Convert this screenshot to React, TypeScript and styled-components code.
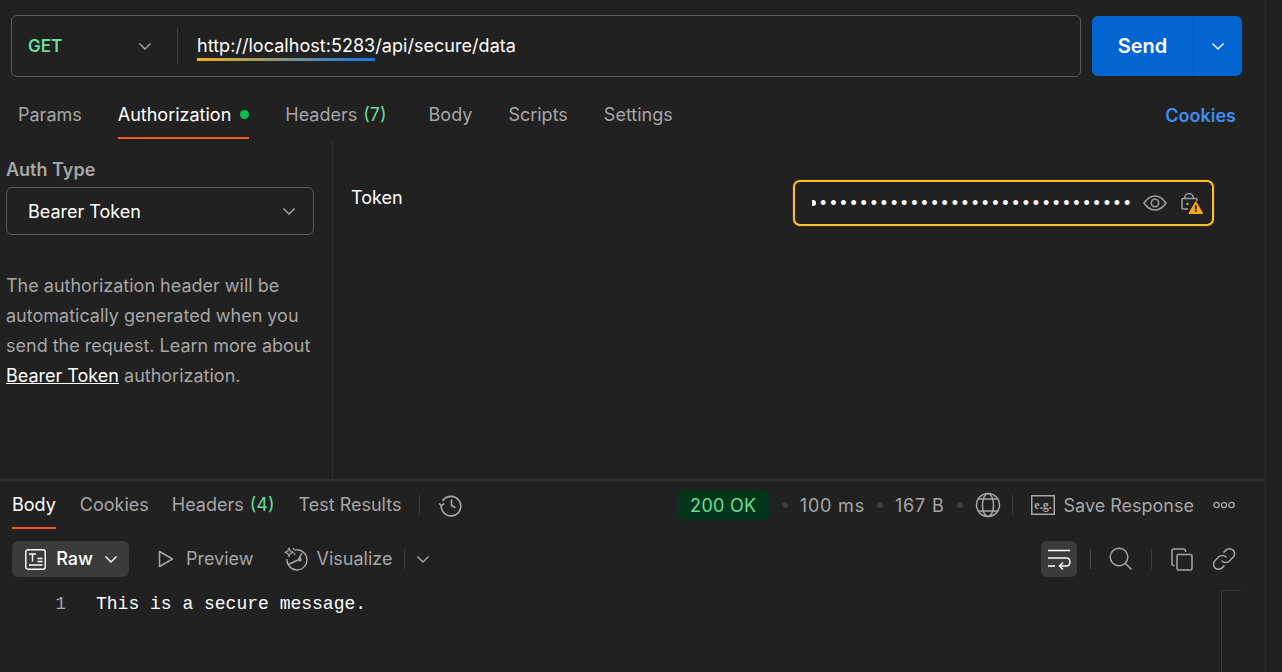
import React from "react";
import styled, { createGlobalStyle } from "styled-components";

const Global = createGlobalStyle`
  html, body { margin: 0; padding: 0; background: #212121; }
  * { box-sizing: border-box; }
`;

const Page = styled.div`
  width: 1282px; height: 672px; background: #212121; overflow: hidden;
  font-family: Inter, "Noto Sans", sans-serif; font-size: 18px; color: #fff;
`;
const Main = styled.main`
  width: 1266px; height: 672px; border-right: 1px solid #2c2c2c;
  display: flex; flex-direction: column;
`;
const RequestPane = styled.section`
  height: 481px; border-bottom: 2px solid #2e2e2e; display: flex; flex-direction: column; flex: none;
`;
const UrlRow = styled.div`
  display: flex; gap: 11px; padding: 15px 23px 0 11px; align-items: center; flex: none;
`;
const UrlBox = styled.div`
  flex: 1; height: 62px; border: 1px solid #5c5c5c; border-radius: 6px;
  display: flex; align-items: center;
`;
const Method = styled.div`
  width: 166px; height: 36px; padding: 0 24px 0 16px; display: flex; align-items: center; justify-content: space-between;
  border-right: 1px solid #3c3c3c; color: #6bdd9a; font-weight: 600; font-size: 17px;
`;
const UrlText = styled.div`
  margin-left: 19px; color: #fff; line-height: 24px; letter-spacing: 0.04px;
`;
const Variable = styled.span`
  display: inline-block; border-bottom: 3px solid; line-height: 24px; margin-bottom: -5px;
  border-image: linear-gradient(90deg, #f0b416, #0a74f0) 1;
`;
const SendGroup = styled.div`
  width: 150px; height: 60px; border-radius: 6px; background: #0265d2; display: flex; flex: none;
`;
const SendLabel = styled.div`
  width: 102px; border-right: 1px solid #0353ab; display: flex; align-items: center; justify-content: center;
  font-weight: 600; font-size: 20px;
`;
const SendArrow = styled.div`
  flex: 1; display: flex; align-items: center; justify-content: center; color: #fff;
`;
const TabRow = styled.div`
  display: flex; align-items: stretch; height: 48px; margin-top: 14px; padding: 0 29px 0 18px; flex: none;
`;
const Tab = styled.div<{ $active?: boolean; $pad?: number }>`
  margin-right: ${p => p.$pad ?? 36}px; height: 48px; display: flex; align-items: center;
  color: ${p => (p.$active ? "#fff" : "#a6a6a6")};
  border-bottom: 2px solid ${p => (p.$active ? "#f05a28" : "transparent")};
  white-space: nowrap;
`;
const Count = styled.span`
  color: #6bdd9a; margin-left: 6px;
`;
const GreenDot = styled.span`
  width: 9px; height: 9px; border-radius: 50%; background: #0cbb52; margin-left: 9px;
`;
const CookiesLink = styled.div`
  margin-left: auto; color: #3d8ef0; font-weight: 600; display: flex; align-items: center;
`;
const AuthBody = styled.div`
  flex: 1; display: flex; min-height: 0;
`;
const AuthSide = styled.div`
  width: 333px; flex: none; border-right: 1px solid #303030; padding: 19px 18px 0 6px;
`;
const AuthLabel = styled.div`
  font-weight: 600; color: #a6a6a6; font-size: 18px; line-height: 24px;
`;
const AuthSelect = styled.div`
  margin-top: 5px; height: 48px; border: 1px solid #5c5c5c; border-radius: 6px;
  display: flex; align-items: center; justify-content: space-between; padding: 0 16px 0 21px;
`;
const AuthNote = styled.p`
  margin: 36px 0 0; color: #a6a6a6; line-height: 30px; font-size: 18px; white-space: nowrap;
`;
const NoteLink = styled.span`
  color: #fff; text-decoration: underline;
`;
const TokenArea = styled.div`
  flex: 1; display: flex; align-items: flex-start; justify-content: space-between; padding: 41px 51px 0 18px;
`;
const TokenLabel = styled.div`
  line-height: 36px;
`;
const TokenField = styled.div`
  width: 421px; height: 46px; border: 2px solid #fcc02e; border-radius: 7px; display: flex; align-items: center;
  padding: 0 10px 0 17px; box-shadow: 0 0 1px #fcc02e;
`;
const HalfDot = styled.span`
  width: 4px; height: 6px; background: #fff; border-radius: 0 3px 3px 0; margin-right: 4px; flex: none;
`;
const TokenDots = styled.div`
  flex: none; white-space: nowrap;
  font-family: "Liberation Sans", sans-serif; font-size: 18px; letter-spacing: 3.83px; line-height: 24px; color: #fff;
`;
const TokenIcons = styled.div`
  display: flex; align-items: center; margin-left: 9px; gap: 14px; color: #9a9a9a;
`;
const ResponsePane = styled.section`
  flex: 1; display: flex; flex-direction: column; min-height: 0;
`;
const ResponseBar = styled.div`
  display: flex; align-items: center; height: 48px; padding: 0 30px 0 12px; flex: none;
`;
const ResTab = styled.div<{ $active?: boolean; $pad?: number }>`
  height: 48px; display: flex; align-items: center; white-space: nowrap;
  margin-right: ${p => p.$pad ?? 24}px; color: ${p => (p.$active ? "#fff" : "#a6a6a6")};
  border-bottom: 2px solid ${p => (p.$active ? "#f05a28" : "transparent")};
`;
const Sep = styled.span<{ $h?: number; $c?: string }>`
  width: 1px; height: ${p => p.$h ?? 20}px; background: ${p => p.$c ?? "#3c3c3c"}; flex: none; display: inline-block;
`;
const HistoryWrap = styled.span`
  margin-left: 18px; display: flex;
`;
const Status = styled.div`
  margin-left: auto; margin-right: 1px; height: 30px; width: 91px; border-radius: 6px; background: #02361a; color: #6bdd9a;
  display: flex; align-items: center; justify-content: center; letter-spacing: 0.3px;
`;
const Stat = styled.span`
  color: #a6a6a6; white-space: nowrap; letter-spacing: 0.8px;
`;
const Bullet = styled.span`
  width: 6px; height: 6px; border-radius: 50%; background: #3d3d3d; margin: 0 12px; flex: none;
`;
const GapSep = styled.span`
  display: flex; margin: 0 18px 0 11px;
`;
const SaveLabel = styled.span`
  color: #a6a6a6; white-space: nowrap; margin-left: 9px;
`;
const MoreWrap = styled.span`
  display: flex; margin-left: 19px;
`;
const ToolRow = styled.div`
  display: flex; align-items: center; height: 36px; margin-top: 12px; padding: 0 29px 0 12px; flex: none;
`;
const ToolLabel = styled.span`
  margin-bottom: 2px;
`;
const RawButton = styled.div`
  width: 117px; height: 36px; border-radius: 6px; background: #3b3b3b; display: flex; align-items: center;
  padding: 0 10px 0 13px; font-weight: 500; color: #fff; justify-content: space-between;
`;
const ViewItem = styled.div<{ $ml: number; $gap: number }>`
  display: flex; align-items: center; margin-left: ${p => p.$ml}px; color: #a6a6a6; gap: ${p => p.$gap}px;
`;
const VizTail = styled.div`
  display: flex; align-items: center; gap: 10px; margin-left: 12px;
`;
const WrapButton = styled.div`
  margin-left: auto; width: 36px; height: 36px; border-radius: 6px; background: #3b3b3b;
  display: flex; align-items: center; justify-content: center; color: #fff;
`;
const ToolIcons = styled.div`
  display: flex; align-items: center; color: #a6a6a6;
`;
const SearchGap = styled.span`
  display: flex; margin: 0 18px 0 13px;
`;
const CopyGap = styled.span`
  display: flex; margin: 0 19px 0 18px;
`;
const LinkGap = styled.span`
  display: flex; margin-left: 19px;
`;
const Editor = styled.div`
  flex: 1; display: flex; padding-top: 15px; min-height: 0;
`;
const LineNo = styled.div`
  width: 66px; text-align: right; color: #a6a6a6; font-family: "Liberation Mono", monospace; font-size: 18px; line-height: 24px; flex: none;
`;
const Code = styled.code`
  margin-left: 30px; font-family: "Liberation Mono", monospace; font-size: 18px; line-height: 24px; color: #fff;
  white-space: pre;
`;
const Minimap = styled.div`
  margin-left: auto; margin-right: 24px; width: 20px; margin-top: -2px; border-left: 1px solid #3a3a3a; border-top: 1px solid #3a3a3a;
`;

const Chevron = ({ size = 16, color = "currentColor", sw = 1.4 }: { size?: number; color?: string; sw?: number }) => (
  <svg width={size} height={size} viewBox="0 0 16 16" fill="none" stroke={color} strokeWidth={sw}>
    <path d="M2.5 5.5 8 11l5.5-5.5" />
  </svg>
);
const Eye = () => (
  <svg width="24" height="16" viewBox="0 0 24 16" fill="none" stroke="currentColor" strokeWidth="1.6">
    <path d="M1 8c3-4.400 6.600-7 11-7s8 2.600 11 7c-3 4.400-6.600 7-11 7S4 12.400 1 8z" />
    <circle cx="12" cy="8" r="3.700" />
  </svg>
);
const LockWarn = () => (
  <svg width="22" height="21" viewBox="0 0 22 21">
    <path d="M3.800 5.500V4.800a4.200 4.200 0 0 1 8.400 0v.7" fill="none" stroke="#a0a0a0" strokeWidth="1.500" />
    <path d="M7 16H2a1 1 0 0 1-1-1V6.500a1 1 0 0 1 1-1h13a1 1 0 0 1 1 1V8" fill="none" stroke="#a0a0a0" strokeWidth="1.500" />
    <circle cx="6.500" cy="11" r="1.300" fill="#a0a0a0" />
    <path d="M14.800 9 21.300 20.200H8.300z" fill="#f7a90f" stroke="#f7a90f" strokeWidth="1.400" strokeLinejoin="round" />
    <path d="M14.800 12.300v4.200M14.800 17.300v1.600" stroke="#212121" strokeWidth="1.800" />
  </svg>
);
const History = () => (
  <svg width="26" height="26" viewBox="0 0 24 24" fill="none" stroke="#a6a6a6" strokeWidth="1.500">
    <path d="M4.200 8.500A9 9 0 1 1 3 12.500" />
    <path d="M1 10.500l2.200 2.200 2.400-2.200" />
    <path d="M12.500 7v5.500l3.500 2" />
  </svg>
);
const Globe = () => (
  <svg width="26" height="26" viewBox="0 0 26 26" fill="none" stroke="#a6a6a6" strokeWidth="1.500">
    <circle cx="13" cy="13" r="11.500" />
    <ellipse cx="13" cy="13" rx="5.500" ry="11.500" />
    <path d="M3.500 7h19M3.500 19h19" />
  </svg>
);
const ExampleIcon = () => (
  <svg width="24" height="20" viewBox="0 0 24 20">
    <rect x="0.750" y="0.750" width="22.500" height="18.500" fill="none" stroke="#a6a6a6" strokeWidth="1.500" />
    <text x="12" y="14" textAnchor="middle" fontFamily="'Liberation Serif', serif" fontWeight="700" fontSize="12" fill="#a6a6a6">e.g.</text>
  </svg>
);
const More = () => (
  <svg width="22" height="8" viewBox="0 0 22 8" fill="none" stroke="#a6a6a6" strokeWidth="1.400">
    <circle cx="3.500" cy="4" r="2.600" /><circle cx="11" cy="4" r="2.600" /><circle cx="18.500" cy="4" r="2.600" />
  </svg>
);
const RawIcon = () => (
  <svg width="21" height="21" viewBox="0 0 21 21" fill="none" stroke="#fff" strokeWidth="1.400">
    <rect x="0.800" y="0.800" width="19.400" height="19.400" rx="2" />
    <path d="M4 5h7M7.500 5v7.500M12.500 9.500h5M12.500 12.500h5M4 16h13.500" />
  </svg>
);
const PlayIcon = () => (
  <svg width="16" height="18" viewBox="0 0 16 18" fill="none" stroke="#a6a6a6" strokeWidth="1.500" strokeLinejoin="round">
    <path d="M1.500 1.500v15L14.500 9z" />
  </svg>
);
const VizIcon = () => (
  <svg width="24" height="25" viewBox="0 0 24 25" fill="none" stroke="#a6a6a6" strokeWidth="1.500">
    <path d="M10.500 3.200A10 10 0 1 1 3 12" />
    <path d="M4.500 17.500 14 13M14 13l4-7" />
    <path d="M14 13.500c1-1.800 2-2.800 2.500-3.500.8 1 1.200 2 1 3.200-.3 1.500-2.500 1.800-3.500.3z" fill="#a6a6a6" stroke="none" />
    <path d="M5 1l1.200 3 3 1.200-3 1.200L5 9.500 3.800 6.400.800 5.200l3-1.200z" strokeWidth="1.200" strokeLinejoin="round" />
    <circle cx="9.500" cy="2" r="0.900" fill="#a6a6a6" stroke="none" />
    <circle cx="10.500" cy="7" r="0.900" fill="#a6a6a6" stroke="none" />
  </svg>
);
const WrapIcon = () => (
  <svg width="24" height="24" viewBox="0 0 24 24" fill="none" stroke="#fff" strokeWidth="1.400">
    <path d="M1 3.500h22M1 11h18.500M1 19h7" />
    <path d="M19.500 11c4.500 0 4.500 8 0 8H13" />
    <path d="M16 15.500 12.500 19l3.500 3.500" />
  </svg>
);
const SearchIcon = () => (
  <svg width="24" height="24" viewBox="0 0 24 24" fill="none" stroke="#a6a6a6" strokeWidth="1.500">
    <circle cx="10" cy="10" r="8.800" /><path d="m16.500 16.500 6 6" />
  </svg>
);
const CopyIcon = () => (
  <svg width="22" height="23" viewBox="0 0 22 23" fill="none" stroke="#a6a6a6" strokeWidth="1.500">
    <rect x="6" y="6.500" width="15" height="15.500" rx="1.500" />
    <path d="M3.500 17.500h-.5A2 2 0 0 1 1 15.500V3a2 2 0 0 1 2-2h9.500a2 2 0 0 1 2 2v1" />
  </svg>
);
const LinkIcon = () => (
  <svg width="24" height="24" viewBox="0 0 24 24" fill="none" stroke="#a6a6a6" strokeWidth="1.500" strokeLinecap="round">
    <path d="M10 14a5 5 0 0 0 7.100.2l4-4a5 5 0 0 0-7.100-7.100l-2 2" />
    <path d="M14 10a5 5 0 0 0-7.100-.2l-4 4a5 5 0 0 0 7.100 7.100l2-2" />
  </svg>
);

export default function App() {
  return (
    <Page>
      <Global />
      <Main>
        <RequestPane>
          <UrlRow>
            <UrlBox>
              <Method>GET<Chevron color="#a6a6a6" /></Method>
              <UrlText><Variable>http://localhost:5283</Variable>/api/secure/data</UrlText>
            </UrlBox>
            <SendGroup>
              <SendLabel>Send</SendLabel>
              <SendArrow><Chevron /></SendArrow>
            </SendGroup>
          </UrlRow>
          <TabRow>
            <Tab>Params</Tab>
            <Tab $active>Authorization<GreenDot /></Tab>
            <Tab $pad={42}>Headers<Count>(7)</Count></Tab>
            <Tab>Body</Tab>
            <Tab>Scripts</Tab>
            <Tab>Settings</Tab>
            <CookiesLink>Cookies</CookiesLink>
          </TabRow>
          <AuthBody>
            <AuthSide>
              <AuthLabel>Auth Type</AuthLabel>
              <AuthSelect>Bearer Token<Chevron color="#a6a6a6" /></AuthSelect>
              <AuthNote>
                The authorization header will be<br />
                automatically generated when you<br />
                send the request. Learn more about<br />
                <NoteLink>Bearer Token</NoteLink> authorization.
              </AuthNote>
            </AuthSide>
            <TokenArea>
              <TokenLabel>Token</TokenLabel>
              <TokenField>
                <HalfDot />
                <TokenDots>{"•".repeat(31)}</TokenDots>
                <TokenIcons><Eye /><LockWarn /></TokenIcons>
              </TokenField>
            </TokenArea>
          </AuthBody>
        </RequestPane>
        <ResponsePane>
          <ResponseBar>
            <ResTab $active>Body</ResTab>
            <ResTab $pad={23}>Cookies</ResTab>
            <ResTab>Headers<Count>(4)</Count></ResTab>
            <ResTab $pad={18}>Test Results</ResTab>
            <Sep />
            <HistoryWrap><History /></HistoryWrap>
            <Status>200 OK</Status>
            <Bullet />
            <Stat>100 ms</Stat>
            <Bullet />
            <Stat>167 B</Stat>
            <Bullet />
            <Globe />
            <GapSep><Sep /></GapSep>
            <ExampleIcon />
            <SaveLabel>Save Response</SaveLabel>
            <MoreWrap><More /></MoreWrap>
          </ResponseBar>
          <ToolRow>
            <RawButton><RawIcon /><ToolLabel>Raw</ToolLabel><Chevron color="#fff" /></RawButton>
            <ViewItem $ml={29} $gap={12}><PlayIcon /><ToolLabel>Preview</ToolLabel></ViewItem>
            <ViewItem $ml={30} $gap={9}><VizIcon /><ToolLabel>Visualize</ToolLabel></ViewItem>
            <VizTail><Sep /><Chevron color="#a6a6a6" /></VizTail>
            <WrapButton><WrapIcon /></WrapButton>
            <ToolIcons>
              <SearchGap><Sep $c="#4a4a4a" /></SearchGap>
              <SearchIcon />
              <CopyGap><Sep /></CopyGap>
              <CopyIcon />
              <LinkGap><LinkIcon /></LinkGap>
            </ToolIcons>
          </ToolRow>
          <Editor>
            <LineNo>1</LineNo>
            <Code>This is a secure message.</Code>
            <Minimap />
          </Editor>
        </ResponsePane>
      </Main>
    </Page>
  );
}
